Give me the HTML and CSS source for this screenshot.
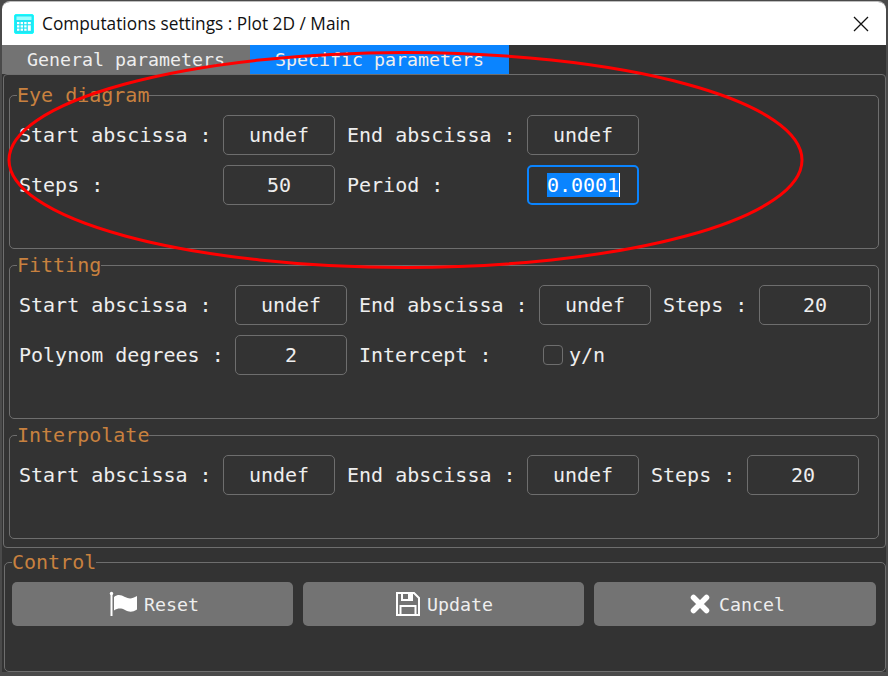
FILE: index.html
```html
<!DOCTYPE html>
<html lang="en">
<head>
<meta charset="utf-8">
<title>Computations settings</title>
<link rel="stylesheet" href="styles.css">
</head>
<body>
<div class="window">
  <header class="titlebar">
    <svg class="app-icon" width="20" height="20" viewBox="0 0 20 20">
      <rect x="0.500" y="0.500" width="19" height="19" rx="1.500" fill="#22e4f4" stroke="#1ff"/>
      <rect x="2.500" y="2.500" width="15" height="3.500" fill="#9ff"/>
      <g fill="#fff">
        <rect x="3" y="8" width="2.400" height="2.200"/><rect x="6.600" y="8" width="2.400" height="2.200"/><rect x="10.200" y="8" width="2.400" height="2.200"/><rect x="13.800" y="8" width="3" height="2.200"/>
        <rect x="3" y="11.300" width="2.400" height="2.200"/><rect x="6.600" y="11.300" width="2.400" height="2.200"/><rect x="10.200" y="11.300" width="2.400" height="2.200"/><rect x="13.800" y="11.300" width="3" height="5.500"/>
        <rect x="3" y="14.600" width="2.400" height="2.200"/><rect x="6.600" y="14.600" width="2.400" height="2.200"/><rect x="10.200" y="14.600" width="2.400" height="2.200"/>
      </g>
    </svg>
    <span class="title">Computations settings : Plot 2D / Main</span>
    <svg class="close" width="16" height="16" viewBox="0 0 16 16"><path d="M1 1L15 15M15 1L1 15" stroke="#111" stroke-width="1.300" fill="none"/></svg>
  </header>
  <nav class="tabs">
    <div class="tab">General parameters</div>
    <div class="tab tab-active">Specific parameters</div>
  </nav>
  <section class="pane">
    <fieldset class="group group-tall">
      <legend>Eye diagram</legend>
      <div class="fields fields-eye">
        <span class="lbl">Start abscissa :</span><div class="inp">undef</div>
        <span class="lbl">End abscissa :</span><div class="inp">undef</div>
        <span class="lbl">Steps :</span><div class="inp">50</div>
        <span class="lbl">Period :</span><div class="inp inp-focus"><span class="sel">0.0001</span></div>
      </div>
    </fieldset>
    <fieldset class="group group-tall">
      <legend>Fitting</legend>
      <div class="fields fields-fit">
        <span class="lbl">Start abscissa :</span><div class="inp">undef</div>
        <span class="lbl">End abscissa :</span><div class="inp">undef</div>
        <span class="lbl">Steps :</span><div class="inp">20</div>
        <span class="lbl">Polynom degrees :</span><div class="inp">2</div>
        <span class="lbl">Intercept :</span>
        <div class="check"><span class="box"></span><span>y/n</span></div>
      </div>
    </fieldset>
    <fieldset class="group">
      <legend>Interpolate</legend>
      <div class="fields fields-interp">
        <span class="lbl">Start abscissa :</span><div class="inp">undef</div>
        <span class="lbl">End abscissa :</span><div class="inp">undef</div>
        <span class="lbl">Steps :</span><div class="inp">20</div>
      </div>
    </fieldset>
  </section>
  <fieldset class="control">
    <legend>Control</legend>
    <div class="buttons">
      <div class="btn">
        <svg width="32" height="26" viewBox="-4 0 32 26"><path d="M1.500 2.500V25" stroke="#fff" stroke-width="2" fill="none"/><circle cx="1.500" cy="2.500" r="1.700" fill="#fff"/><path d="M4 6C8 3 11 4 15 6S22 8 27 5V18.500C22 21.500 19 21 15 19S8 17 4 19.500Z" fill="#fff"/></svg>
        <span>Reset</span>
      </div>
      <div class="btn">
        <svg width="27" height="24" viewBox="-2 0 27 24"><path d="M1 1H18L23 6V23H1Z" fill="none" stroke="#fff" stroke-width="2"/><path d="M6 1V8H16V1" fill="none" stroke="#fff" stroke-width="2"/><rect x="12" y="2" width="3" height="5" fill="#fff"/><path d="M4.500 22V14H19.500V22" fill="none" stroke="#fff" stroke-width="2"/></svg>
        <span>Update</span>
      </div>
      <div class="btn">
        <svg width="28" height="20" viewBox="-5 0 28 20"><path d="M3.500 3.500L16.500 16.500M16.500 3.500L3.500 16.500" stroke="#fff" stroke-width="5.500" stroke-linecap="round" fill="none"/></svg>
        <span>Cancel</span>
      </div>
    </div>
  </fieldset>
</div>
<svg class="scribble" width="888" height="676" viewBox="0 0 888 676"><ellipse cx="405.500" cy="160" rx="396.500" ry="107.500" fill="none" stroke="#f00" stroke-width="3"/></svg>
</body>
</html>
```
FILE: styles.css
```css
* { box-sizing: border-box; }
html, body { margin: 0; height: 100%; }
body {
  width: 888px;
  height: 676px;
  overflow: hidden;
  background: #4a4a4a;
  font-family: "DejaVu Sans Mono", monospace;
  font-size: 20px;
  color: #eee;
  padding: 1px 2px 4px 2px;
}
.window {
  width: 884px;
  height: 671px;
  background: #333;
  border-top: 1px solid #bdbdbd;
  border-radius: 8px 8px 0 0;
  overflow: hidden;
  position: relative;
  display: flex;
  flex-direction: column;
}
.titlebar {
  height: 43px;
  flex: none;
  background: #fff;
  color: #111;
  display: flex;
  align-items: center;
  padding: 0 17px 0 12px;
  font-family: "Open Sans", sans-serif;
  font-size: 17.300px;
}
.app-icon { flex: none; }
.title { margin-left: 8px; }
.close { margin-left: auto; }
.tabs { display: flex; height: 29px; flex: none; }
.tab {
  width: 248px;
  padding: 0 0 0 25px;
  background: #737373;
  font-size: 18.300px;
  line-height: 29px;
  white-space: nowrap;
}
.tab-active { width: 259px; background: #0a84ff; }
.pane {
  margin: 0 0 0 1px;
  width: 883px;
  height: 474px;
  flex: none;
  border: 1px solid #6e6e6e;
  border-radius: 4px;
  padding: 8px 6px 0 5px;
}
.group, .control {
  margin: 0;
  border: 1px solid #6e6e6e;
  border-radius: 5px;
  min-width: 0;
}
.group {
  padding: 8px 9px 43px 9px;
  height: 166px;
  margin-bottom: 4px;
}
.group:last-child { height: 116px; margin-bottom: 0; }
legend {
  padding: 0;
  margin-left: -2px;
  line-height: 24px;
  color: #c8813f;
  font-size: 20px;
}
.fields {
  display: grid;
  column-gap: 12px;
  row-gap: 10px;
  align-items: center;
}
.fields-eye { grid-template-columns: 192px 112px 168px 112px; }
.fields-fit { grid-template-columns: 204px 112px 168px 112px 84px 112px; }
.fields-interp { grid-template-columns: 192px 112px 168px 112px 84px 112px; }
.lbl { white-space: pre; }
.inp {
  height: 40px;
  border: 1px solid #6e6e6e;
  border-radius: 5px;
  display: flex;
  align-items: center;
  justify-content: center;
}
.inp-focus { border: 2px solid #0a84ff; }
.sel {
  background: #0a84ff;
  color: #fff;
  line-height: 24px;
  border-right: 1px solid #fff;
  margin-right: -1px;
}
.check { display: flex; align-items: center; gap: 6px; padding-left: 4px; }
.box {
  width: 20px;
  height: 20px;
  border: 1px solid #6e6e6e;
  border-radius: 4px;
}
.control {
  margin: 2px 0 0 2px;
  width: 882px;
  height: 122px;
  padding: 8px 9px 0 7px;
  flex: none;
}
.control legend { margin-left: 0; }
.buttons {
  display: grid;
  grid-template-columns: 281px 281px 282px;
  column-gap: 10px;
}
.btn {
  height: 44px;
  background: #737373;
  border-radius: 5px;
  display: flex;
  align-items: center;
  justify-content: center;
  gap: 6px;
  font-size: 18.300px;
}
.scribble { position: absolute; left: 0; top: 0; pointer-events: none; }
```
